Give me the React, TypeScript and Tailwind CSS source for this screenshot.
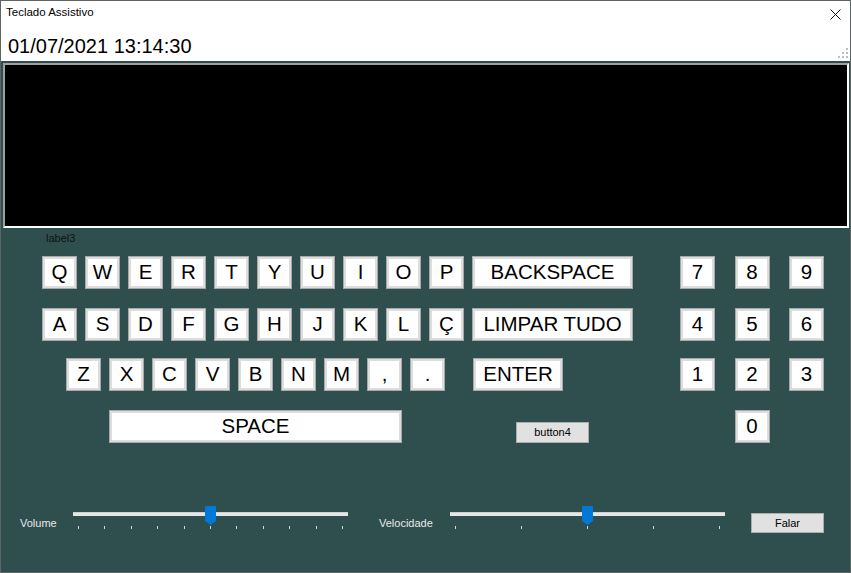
import React from "react";

const letters1 = ["Q", "W", "E", "R", "T", "Y", "U", "I", "O", "P"];
const letters2 = ["A", "S", "D", "F", "G", "H", "J", "K", "L", "Ç"];
const letters3 = ["Z", "X", "C", "V", "B", "N", "M", ",", "."];

function Key({ label, className = "w-[35px]" }: { label: string; className?: string }) {
  return (
    <div
      className={`flex items-center justify-center h-[33px] shrink-0 bg-white border border-[#a8a8a8] shadow-[inset_0_0_0_2px_#dddddd] text-[20.5px] leading-none text-black ${className}`}
    >
      {label}
    </div>
  );
}

function Numpad({ keys }: { keys: (string | null)[] }) {
  return (
    <div className="flex justify-between w-[144px]">
      {keys.map((k, i) => (k ? <Key key={i} label={k} /> : <div key={i} className="w-[35px]" />))}
    </div>
  );
}

function Slider({ ticks }: { ticks: number }) {
  return (
    <div className="relative w-[275px] h-[26px] shrink-0">
      {/* trilha */}
      <div className="absolute left-0 right-0 top-[7px] h-[4px] bg-[#e6e6e6] border-t border-[#d0d0d0]" />
      {/* cursor */}
      <svg className="absolute left-[132px] top-[1px]" width="11" height="19" viewBox="0 0 11 19">
        <path d="M0 0 H11 V15 L5.5 19 L0 15 Z" fill="#0078d7" />
      </svg>
      {/* marcas */}
      <div className="absolute left-0 right-0 top-[21px] flex justify-between pl-[5px] pr-[5px]">
        {Array.from({ length: ticks }).map((_, i) => (
          <div key={i} className="w-px h-[3px] bg-[#d6d6d6]" />
        ))}
      </div>
    </div>
  );
}

export default function App() {
  return (
    <div className="w-[851px] h-[573px] flex flex-col border border-[#5f6464] bg-[#2f4f4f] overflow-hidden font-['Liberation_Sans',Arial,sans-serif]">
      {/* ── Barra de título ── */}
      <header className="h-[60px] shrink-0 bg-white flex flex-col">
        <div className="flex items-center justify-between h-[24px] pl-[5px] pr-[9px]">
          <span className="text-[11.5px] text-black">Teclado Assistivo</span>
          <svg width="11" height="11" viewBox="0 0 11 11" className="mt-[2px]">
            <path d="M0.5 0.5 L10.5 10.5 M10.5 0.5 L0.5 10.5" stroke="#111" strokeWidth="1" />
          </svg>
        </div>
        <div className="flex items-end justify-between pl-[7px] pr-[2px]">
          <span className="text-[20px] leading-[24px] text-black mt-[9px]">01/07/2021 13:14:30</span>
          <svg width="10" height="10" viewBox="0 0 10 10">
            <rect x="8" y="0" width="2" height="2" fill="#bdbdbd" />
            <rect x="4" y="4" width="2" height="2" fill="#bdbdbd" />
            <rect x="8" y="4" width="2" height="2" fill="#bdbdbd" />
            <rect x="0" y="8" width="2" height="2" fill="#bdbdbd" />
            <rect x="4" y="8" width="2" height="2" fill="#bdbdbd" />
            <rect x="8" y="8" width="2" height="2" fill="#bdbdbd" />
          </svg>
        </div>
      </header>

      {/* ── Área de texto ── */}
      <div className="mt-[2px] ml-[2px] mr-px h-[165px] shrink-0 bg-black border-2 border-t-[#a0a0a0] border-l-[#a0a0a0] border-b-white border-r-white" />

      <div className="mt-[3px] pl-[45px] text-[11px] leading-[14px] text-[#111]">label3</div>

      {/* ── Teclado ── */}
      <div className="mt-[11px] flex">
        <div className="w-[679px] flex gap-[8px] pl-[41px]">
          {letters1.map((l) => (
            <Key key={l} label={l} />
          ))}
          <Key label="BACKSPACE" className="w-[161px]" />
        </div>
        <Numpad keys={["7", "8", "9"]} />
      </div>

      <div className="mt-[19px] flex">
        <div className="w-[679px] flex gap-[8px] pl-[41px]">
          {letters2.map((l) => (
            <Key key={l} label={l} />
          ))}
          <Key label="LIMPAR TUDO" className="w-[161px]" />
        </div>
        <Numpad keys={["4", "5", "6"]} />
      </div>

      <div className="mt-[17px] flex">
        <div className="w-[679px] flex gap-[8px] pl-[65px]">
          {letters3.map((l, i) => (
            <Key key={i} label={l} />
          ))}
          <Key label="ENTER" className="w-[90px] ml-[20px]" />
        </div>
        <Numpad keys={["1", "2", "3"]} />
      </div>

      <div className="mt-[19px] flex">
        <div className="w-[679px] flex items-start pl-[108px]">
          <Key label="SPACE" className="w-[293px]" />
          <button className="ml-[114px] mt-[12px] w-[73px] h-[21px] bg-[#e1e1e1] border border-[#adadad] text-[11px] text-black">
            button4
          </button>
        </div>
        <Numpad keys={[null, "0", null]} />
      </div>

      {/* ── Controles de voz ── */}
      <div className="mt-[62px] flex items-start">
        <span className="ml-[19px] mt-[11px] w-[53px] text-[11px] leading-[14px] text-[#e8e8e8]">Volume</span>
        <Slider ticks={11} />
        <span className="ml-[31px] mt-[11px] w-[71px] text-[11px] leading-[14px] text-[#e8e8e8]">Velocidade</span>
        <Slider ticks={5} />
        <button className="ml-[26px] mt-[8px] w-[73px] h-[20px] bg-[#e1e1e1] border border-[#adadad] text-[11px] text-black">
          Falar
        </button>
      </div>
    </div>
  );
}
